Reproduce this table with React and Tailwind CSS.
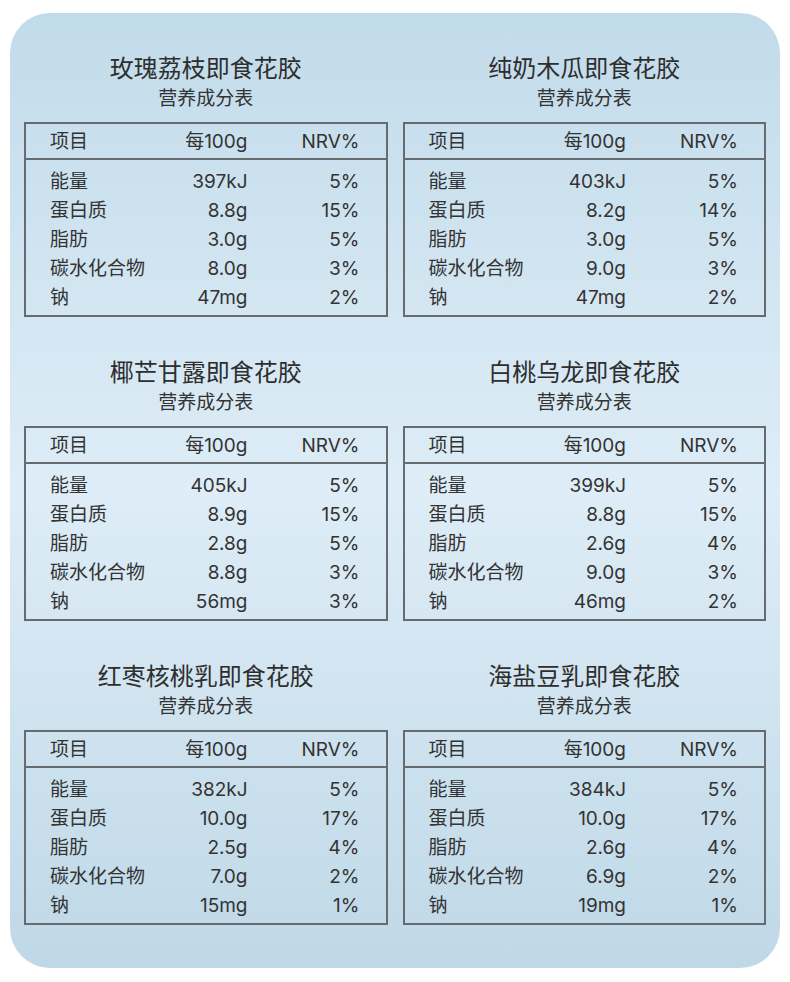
const products = [
  {
    name: "玫瑰荔枝即食花胶",
    rows: [
      ["能量", "397kJ", "5%"],
      ["蛋白质", "8.8g", "15%"],
      ["脂肪", "3.0g", "5%"],
      ["碳水化合物", "8.0g", "3%"],
      ["钠", "47mg", "2%"],
    ],
  },
  {
    name: "纯奶木瓜即食花胶",
    rows: [
      ["能量", "403kJ", "5%"],
      ["蛋白质", "8.2g", "14%"],
      ["脂肪", "3.0g", "5%"],
      ["碳水化合物", "9.0g", "3%"],
      ["钠", "47mg", "2%"],
    ],
  },
  {
    name: "椰芒甘露即食花胶",
    rows: [
      ["能量", "405kJ", "5%"],
      ["蛋白质", "8.9g", "15%"],
      ["脂肪", "2.8g", "5%"],
      ["碳水化合物", "8.8g", "3%"],
      ["钠", "56mg", "3%"],
    ],
  },
  {
    name: "白桃乌龙即食花胶",
    rows: [
      ["能量", "399kJ", "5%"],
      ["蛋白质", "8.8g", "15%"],
      ["脂肪", "2.6g", "4%"],
      ["碳水化合物", "9.0g", "3%"],
      ["钠", "46mg", "2%"],
    ],
  },
  {
    name: "红枣核桃乳即食花胶",
    rows: [
      ["能量", "382kJ", "5%"],
      ["蛋白质", "10.0g", "17%"],
      ["脂肪", "2.5g", "4%"],
      ["碳水化合物", "7.0g", "2%"],
      ["钠", "15mg", "1%"],
    ],
  },
  {
    name: "海盐豆乳即食花胶",
    rows: [
      ["能量", "384kJ", "5%"],
      ["蛋白质", "10.0g", "17%"],
      ["脂肪", "2.6g", "4%"],
      ["碳水化合物", "6.9g", "2%"],
      ["钠", "19mg", "1%"],
    ],
  },
];

function Row({ cells, className = "" }) {
  return (
    <div className={`flex items-center h-[29px] pl-[24px] pr-[26px] ${className}`}>
      <span className="flex-1">{cells[0]}</span>
      <span className="w-[97px] text-right">{cells[1]}</span>
      <span className="w-[112px] text-right">{cells[2]}</span>
    </div>
  );
}

function NutritionCard({ product }) {
  return (
    <div className="flex flex-col">
      {/* Title */}
      <h2 className="text-center text-[24px] leading-[30px] font-normal text-[#2e2e2e]">
        {product.name}
      </h2>
      <p className="mt-[2px] text-center text-[19px] leading-[26px] text-[#333]">营养成分表</p>

      {/* Table */}
      <div className="mt-[10px] h-[195px] border-2 border-[#666b70] text-[19px] text-[#333]">
        <Row
          cells={["项目", "每100g", "NRV%"]}
          className="h-[36px] pt-[2px] border-b-2 border-[#666b70]"
        />
        <div className="pt-[8px]">
          {product.rows.map((r) => (
            <Row key={r[0]} cells={r} />
          ))}
        </div>
      </div>
    </div>
  );
}

export default function App() {
  return (
    <div
      className="w-[790px] h-[982px] bg-white pt-[13px] px-[10px]"
      style={{ fontFamily: 'Inter, "Noto Sans CJK SC", sans-serif' }}
    >
      <div className="h-[955px] rounded-[40px] bg-linear-to-b from-[#c2dbea] via-[#deedf7] to-[#bfd8e7] px-[14px] pt-[41px]">
        <div className="grid grid-cols-2 gap-x-[15px] gap-y-[41px]">
          {products.map((p) => (
            <NutritionCard key={p.name} product={p} />
          ))}
        </div>
      </div>
    </div>
  );
}
